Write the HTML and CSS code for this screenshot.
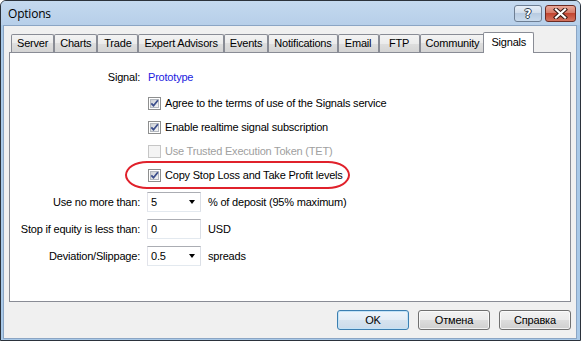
FILE: index.html
```html
<!DOCTYPE html>
<html lang="en">
<head>
    <meta charset="UTF-8">
    <meta name="viewport" content="width=device-width, initial-scale=1.0">
    <title>Options</title>
    <link rel="stylesheet" href="styles.css">
</head>
<body>
    <div class="window">
        <div class="titlebar">
            <span class="title">Options</span>
            <div class="caption-buttons">
                <button type="button" class="cap help">?</button>
                <button type="button" class="cap close">
                    <svg width="15" height="11" viewBox="0 0 15 11">
                        <path d="M3 1.5 L12 9.5 M12 1.5 L3 9.5" stroke="#3a1a15" stroke-width="4.2" stroke-linecap="square"/>
                        <path d="M3 1.5 L12 9.5 M12 1.5 L3 9.5" stroke="#fff" stroke-width="2.2" stroke-linecap="square"/>
                    </svg>
                </button>
            </div>
        </div>

        <div class="client">
            <div class="tabs">
                <div class="tab">Server</div>
                <div class="tab">Charts</div>
                <div class="tab">Trade</div>
                <div class="tab">Expert Advisors</div>
                <div class="tab">Events</div>
                <div class="tab">Notifications</div>
                <div class="tab">Email</div>
                <div class="tab">FTP</div>
                <div class="tab">Community</div>
                <div class="tab active">Signals</div>
            </div>

            <div class="panel">
                <div class="row signal">
                    <span class="label">Signal:</span>
                    <span class="link">Prototype</span>
                </div>

                <div class="checks">
                    <div class="check">
                        <svg class="box" width="13" height="13"><use href="#cb-on"/></svg>
                        <span>Agree to the terms of use of the Signals service</span>
                    </div>
                    <div class="check">
                        <svg class="box" width="13" height="13"><use href="#cb-on"/></svg>
                        <span>Enable realtime signal subscription</span>
                    </div>
                    <div class="check disabled">
                        <svg class="box" width="13" height="13"><use href="#cb-off"/></svg>
                        <span>Use Trusted Execution Token (TET)</span>
                    </div>
                    <div class="check">
                        <svg class="box" width="13" height="13"><use href="#cb-on"/></svg>
                        <span>Copy Stop Loss and Take Profit levels</span>
                        <div class="highlight"></div>
                    </div>
                </div>

                <div class="fields">
                    <div class="row">
                        <span class="label">Use no more than:</span>
                        <div class="combo"><span>5</span><i class="arrow"></i></div>
                        <span class="unit">% of deposit (95% maximum)</span>
                    </div>
                    <div class="row">
                        <span class="label">Stop if equity is less than:</span>
                        <div class="combo"><span>0</span></div>
                        <span class="unit">USD</span>
                    </div>
                    <div class="row">
                        <span class="label">Deviation/Slippage:</span>
                        <div class="combo"><span>0.5</span><i class="arrow"></i></div>
                        <span class="unit">spreads</span>
                    </div>
                </div>
            </div>

            <div class="buttons">
                <button type="button" class="btn default">OK</button>
                <button type="button" class="btn">Отмена</button>
                <button type="button" class="btn">Справка</button>
            </div>
        </div>
    </div>

    <!-- shared checkbox drawings -->
    <svg class="defs" width="0" height="0">
        <defs>
            <linearGradient id="cbg" x1="0" y1="0" x2="1" y2="1">
                <stop offset="0" stop-color="#c9cdd3"/>
                <stop offset="1" stop-color="#f7f7f7"/>
            </linearGradient>
        </defs>
        <symbol id="cb-on" viewBox="0 0 13 13">
            <rect x=".5" y=".5" width="12" height="12" fill="#fff" stroke="#8e8f8f"/>
            <rect x="2.5" y="2.5" width="8" height="8" fill="url(#cbg)" stroke="#b3b8bf"/>
            <path d="M3.3 6.3 L5.5 8.7 L9.9 3.3" fill="none" stroke="#3c4f8c" stroke-width="1.8"/>
        </symbol>
        <symbol id="cb-off" viewBox="0 0 13 13">
            <rect x=".5" y=".5" width="12" height="12" fill="#f4f4f4" stroke="#c6c6c6"/>
        </symbol>
    </svg>
</body>
</html>
```

FILE: styles.css
```css
* {
    box-sizing: border-box;
}

body {
    margin: 0;
    font-family: "Liberation Sans", Arial, sans-serif;
    font-size: 11px;
    letter-spacing: -0.2px;
    color: #000;
}

.window {
    width: 581px;
    height: 341px;
    display: flex;
    flex-direction: column;
    background-color: #a9c9e8;
    border: 1px solid #2b323b;
    border-radius: 6px 6px 0 0;
    overflow: hidden;
}

.titlebar {
    height: 24px;
    flex: none;
    display: flex;
    align-items: center;
    padding-left: 7px;
    background: linear-gradient(#c4d9ef, #b7cfe9);
}

.title {
    font-family: "Open Sans", sans-serif;
    font-size: 12px;
    margin-top: 1px;
}

.caption-buttons {
    margin-left: auto;
    margin-right: 4px;
    align-self: flex-start;
    margin-top: 4px;
    display: flex;
    gap: 3px;
}

.cap {
    height: 17px;
    padding: 0;
    border: 1px solid;
    border-radius: 3px;
    display: flex;
    align-items: center;
    justify-content: center;
}

.help {
    width: 28px;
    border-color: #6d7e93;
    background: linear-gradient(#e7eff8, #d2deec 45%, #b8cbe1 50%, #c9daec);
    font-family: "DejaVu Sans", sans-serif;
    font-weight: bold;
    font-size: 12px;
    color: #fff;
    text-shadow: 1px 0 0 #2e3b4b, -1px 0 0 #2e3b4b, 0 1px 0 #2e3b4b, 0 -1px 0 #2e3b4b;
}

.close {
    width: 31px;
    border-color: #6b2b23;
    background: linear-gradient(#eaa899, #d57b69 45%, #c24531 50%, #d3735f);
}

.client {
    flex: 1;
    margin: 0 3px 1px 2px;
    padding: 6px 5px 8px 5px;
    background-color: #f0f0f0;
    border: 1px solid #8ba5c4;
    display: flex;
    flex-direction: column;
}

.tabs {
    height: 20px;
    flex: none;
    display: flex;
    align-items: flex-end;
    padding-left: 2px;
    position: relative;
    z-index: 1;
}

.tab {
    height: 18px;
    min-width: 41px;
    padding: 0 5px 1px;
    border: 1px solid #898c95;
    border-bottom: none;
    border-radius: 2px 2px 0 0;
    background: linear-gradient(#f3f3f3, #ebebeb 50%, #dedede 50%, #d4d4d4);
    display: flex;
    align-items: center;
    justify-content: center;
}

.tab.active {
    height: 21px;
    margin: 0 -2px -1px;
    padding: 0 7px 2px;
    background: #fff;
}

.panel {
    flex: 1;
    padding-top: 16px;
    background-color: #fff;
    border: 1px solid #898c95;
}

.row {
    display: flex;
    align-items: center;
    height: 16px;
}

.label {
    width: 130px;
    flex: none;
    text-align: right;
    margin-right: 8px;
}

.link {
    color: #1c1ce0;
}

.checks {
    margin: 10px 0 0 138px;
    display: flex;
    flex-direction: column;
    gap: 8px;
}

.check {
    height: 16px;
    display: flex;
    align-items: center;
    gap: 4px;
    position: relative;
}

.check .box {
    flex: none;
}

.check.disabled {
    color: #a0a0a0;
}

.highlight {
    position: absolute;
    left: -23px;
    top: -6px;
    width: 225px;
    height: 28px;
    border: 2px solid #e0212b;
    border-radius: 22px / 14px;
}

.fields {
    margin-top: 9px;
    display: flex;
    flex-direction: column;
    gap: 7px;
}

.fields .row {
    height: 20px;
}

.fields .label {
    margin-right: 7px;
}

.combo {
    width: 54px;
    height: 20px;
    flex: none;
    display: flex;
    align-items: center;
    padding-left: 3px;
    background: #fff;
    border: 1px solid;
    border-color: #abadb3 #dbdfe6 #e3e9ef #e2e3ea;
}

.arrow {
    margin-left: auto;
    margin-right: 5px;
    border-left: 3.5px solid transparent;
    border-right: 3.5px solid transparent;
    border-top: 4px solid #000;
}

.unit {
    margin-left: 7px;
}

.buttons {
    flex: none;
    margin-top: 8px;
    display: flex;
    justify-content: flex-end;
    gap: 9px;
}

.btn {
    width: 72px;
    height: 20px;
    padding: 0;
    font: inherit;
    letter-spacing: inherit;
    color: #000;
    border: 1px solid #707070;
    border-radius: 3px;
    background: linear-gradient(#f2f2f2, #ebebeb 50%, #dddddd 50%, #cfcfcf);
    box-shadow: inset 0 0 0 1px rgba(255, 255, 255, 0.7);
}

.btn.default {
    border-color: #3c7fb1;
    background: linear-gradient(#eef5fb, #e3edf6 50%, #d6e3ef 50%, #cbdbea);
    box-shadow: inset 0 0 0 1px #c3e3f7;
}

.defs {
    display: block;
}
```
